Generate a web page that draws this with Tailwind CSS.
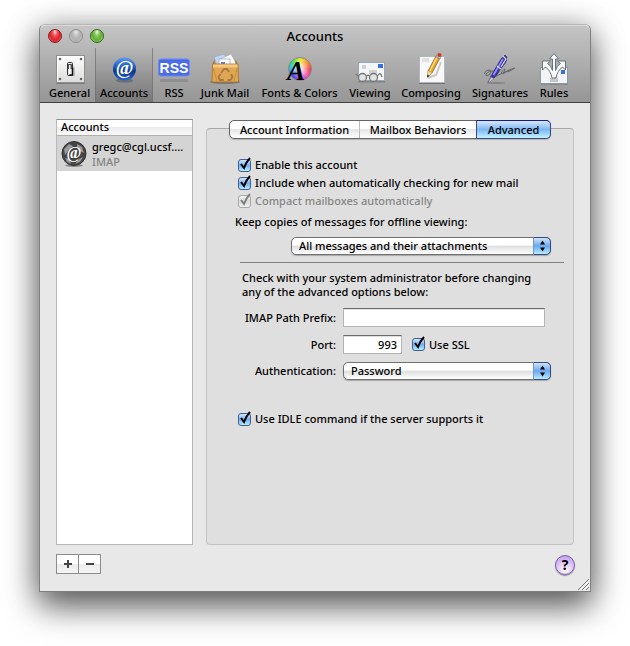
<!DOCTYPE html>
<html lang="en">

<head>
    <meta charset="UTF-8">
    <meta name="viewport" content="width=device-width, initial-scale=1.0">
    <title>Accounts</title>
    <!-- Tailwind CSS -->
    <script src="https://cdn.jsdelivr.net/npm/@tailwindcss/browser@4"></script>
</head>

<body class="bg-white text-black font-['Noto_Sans','Open_Sans',sans-serif] text-[11px] leading-4 font-medium">
    <main class="min-h-screen flex flex-col px-[39px] pt-6 pb-[54px]">
        <div
            class="relative flex-1 flex flex-col rounded-t-md border border-[#808080] border-t-[#b8b8b8] bg-[#e8e8e8] shadow-[0_16px_32px_rgba(0,0,0,0.5),0_4px_32px_rgba(0,0,0,0.35)]">

            <!-- Title bar and toolbar -->
            <header
                class="rounded-t-[5px] border-t border-[#d8d8d8] bg-linear-to-b from-[#c5c5c5] to-[#969696] shadow-[0_1px_0_#404040]">
                <div class="relative flex h-5 items-center justify-center">
                    <div class="absolute left-2 top-[3px] flex gap-[7px]">
                        <button aria-label="Close"
                            class="size-3.5 rounded-full border border-[#7d1a1c] bg-[radial-gradient(ellipse_at_50%_15%,#ffe0e0_0%,#f0555a_28%,#dd1f28_58%,#ff8a8a_100%)]"></button>
                        <button aria-label="Minimize"
                            class="size-3.5 rounded-full border border-[#8b8b8b] bg-[radial-gradient(ellipse_at_50%_15%,#e8e8e8_0%,#b9b9b9_40%,#b0b0b0_60%,#d8d8d8_100%)]"></button>
                        <button aria-label="Zoom"
                            class="size-3.5 rounded-full border border-[#2f6316] bg-[radial-gradient(ellipse_at_50%_15%,#f0ffe4_0%,#8cc860_28%,#5fae32_58%,#c8f596_100%)]"></button>
                    </div>
                    <h1 class="text-[13px]">Accounts</h1>
                </div>
                <nav class="flex pt-0.5 pl-1 text-center">
                    <button class="flex w-[51px] flex-col items-center pt-[5px] pb-px">
                        <svg class="size-8" viewBox="0 0 32 32">
                            <defs>
                                <linearGradient id="plate" x1="0" y1="0" x2="0" y2="1">
                                    <stop offset="0" stop-color="#fff" />
                                    <stop offset="1" stop-color="#dcdcda" />
                                </linearGradient>
                            </defs>
                            <path d="M2 30.500h29" stroke="#555" stroke-opacity=".5" />
                            <rect x="2.500" y="2.500" width="28" height="27" fill="url(#plate)" stroke="#8e8e8a" />
                            <path d="M3.500 29V3.500h26" fill="none" stroke="#fff" />
                            <g fill="#666">
                                <circle cx="6" cy="6" r="1.300" />
                                <circle cx="27" cy="6" r="1.300" />
                                <circle cx="6" cy="26" r="1.300" />
                                <circle cx="27" cy="26" r="1.300" />
                            </g>
                            <path d="M18 11l3 4v8h-6z" fill="#999" opacity=".5" />
                            <rect x="13.500" y="9.500" width="5" height="13" rx="1" fill="#e8e8e8" stroke="#333" />
                            <path d="M14 11h4v5h-4z" fill="#555" />
                            <path d="M15 12h1.500v9h-1.500z" fill="#fff" />
                            <path d="M18.500 15v7h-3" fill="none" stroke="#111" stroke-width="1.500" />
                        </svg>
                        General
                    </button>
                    <button
                        class="flex w-[58px] flex-col items-center border-x border-[#6f6f6f]/70 bg-linear-to-b from-black/0 to-black/20 pt-[5px] pb-px">
                        <svg class="size-8" viewBox="0 0 32 32">
                            <defs>
                                <linearGradient id="at" x1="0" y1="0" x2="0" y2="1">
                                    <stop offset="0" stop-color="#5d9bf0" />
                                    <stop offset=".45" stop-color="#1c55b8" />
                                    <stop offset=".6" stop-color="#0c3588" />
                                    <stop offset="1" stop-color="#2b68cc" />
                                </linearGradient>
                            </defs>
                            <ellipse cx="16.500" cy="27.500" rx="9" ry="2" fill="#333" opacity=".35" />
                            <circle cx="16.500" cy="16" r="11.500" fill="url(#at)" />
                            <text x="16.500" y="21" text-anchor="middle" font-family="Liberation Serif, serif"
                                font-size="19" font-weight="bold" fill="#fff">@</text>
                        </svg>
                        Accounts
                    </button>
                    <button class="flex w-[42px] flex-col items-center pt-[5px] pb-px">
                        <svg class="size-8" viewBox="0 0 32 32">
                            <rect x="2" y="26" width="28" height="3" rx="1" fill="#000" opacity=".12" />
                            <rect x=".5" y="6" width="31" height="17" rx="2.500" fill="#4a6be8" stroke="#6e8cf2" />
                            <text x="16" y="20" text-anchor="middle" font-family="Liberation Sans, sans-serif"
                                font-size="14" font-weight="bold" fill="#fff">RSS</text>
                        </svg>
                        RSS
                    </button>
                    <button class="flex w-[60px] flex-col items-center pt-[5px] pb-px">
                        <svg class="size-8" viewBox="0 0 32 32">
                            <ellipse cx="16" cy="29" rx="15" ry="2" fill="#333" opacity=".35" />
                            <path d="M5 4l10-3 6 9-12 6z" fill="#c2d6f0" stroke="#8ea8cc" stroke-width=".7" />
                            <path d="M11 6l11-5 6 11-13 3z" fill="#fafafa" stroke="#aaa" stroke-width=".7" />
                            <path d="M10 6h11v9h-11z" fill="#fff" stroke="#8aa0c4" stroke-width=".7" />
                            <path d="M12 9h4v3h-4z" fill="#5a83cc" />
                            <path d="M3.500 11l2-5v5zM28.500 11l-2-5v5z" fill="#a8701e" />
                            <path d="M3.500 11h25.500l.5 18h-26.500z" fill="#e0a654" stroke="#a8701e"
                                stroke-width=".8" />
                            <path d="M4 11.500h24.500v3h-24.500z" fill="#f4c880" />
                            <path d="M4 15l4 13M28 15l-3 13" stroke="#c98832" opacity=".7" />
                            <path d="M12 20l3-4h3l2 3M22 21l1.500 3-2 3h-3M15 27h-4l-1.500-3 2-3" fill="none"
                                stroke="#a87c40" stroke-width="2" />
                        </svg>
                        Junk Mail
                    </button>
                    <button class="flex w-[89px] flex-col items-center pt-[5px] pb-px">
                        <span class="relative flex size-8 items-center justify-center">
                            <span
                                class="size-6 rounded-full border border-[#888] bg-[radial-gradient(circle,#fff_0%,rgba(255,255,255,0)_65%),conic-gradient(#e8f020,#ff9030,#f04048,#f050b0,#b040f0,#4040f0,#30b0f0,#30e060,#e8f020)]"></span>
                            <svg class="absolute inset-0" viewBox="0 0 32 32">
                                <text x="12" y="27" text-anchor="middle" font-family="Liberation Serif, serif"
                                    font-size="27" font-weight="bold" font-style="italic">A</text>
                            </svg>
                        </span>
                        Fonts &amp; Colors
                    </button>
                    <button class="flex w-[52px] flex-col items-center pt-[5px] pb-px">
                        <svg class="size-8" viewBox="0 0 32 32">
                            <path d="M4 28.500h27" stroke="#444" stroke-width="2" opacity=".3" />
                            <rect x="4.500" y="9.500" width="26" height="18" fill="#f4f6f8" stroke="#96a6b4" />
                            <rect x="24" y="11" width="5" height="4" fill="#3a6ee0" />
                            <path d="M8 13h4M8 15h4M15 18h8M15 20h8" stroke="#aaa" />
                            <g fill="#d8dcde" fill-opacity=".75" stroke="#777" stroke-width="1.300">
                                <circle cx="8.500" cy="24.500" r="4" />
                                <circle cx="19.500" cy="24.500" r="4" />
                                <path d="M12.500 23q1.500-1.500 3 0M23.500 23q3-5 4.500 1M4.500 23l-3-2" fill="none" />
                            </g>
                        </svg>
                        Viewing
                    </button>
                    <button class="flex w-[70px] flex-col items-center pt-[5px] pb-px">
                        <svg class="size-8" viewBox="0 0 32 32">
                            <path d="M4 30.500h26" stroke="#444" opacity=".5" />
                            <rect x="4.500" y="3.500" width="25" height="26" fill="#f8f8f8" stroke="#b0b8bc" />
                            <path d="M7 6h7M7 8h7" stroke="#c8c8c8" />
                            <path d="M13 25l8-3 5-13" fill="none" stroke="#aaa" opacity=".6" stroke-width="2" />
                            <path d="M13 18l8-15 4 2-8 15-4.500 4z" fill="#e8a030" stroke="#8a5c20"
                                stroke-width=".7" />
                            <path d="M15 18l7-14" stroke="#ffdc70" stroke-width="1.500" />
                            <path d="M13 18l4 2-4.800 4z" fill="#f0d4a8" />
                            <path d="M12 24.500l.5-3 2 1.500z" fill="#222" />
                            <path d="M21 4l1.500-3 4 2-1.500 3z" fill="#bbb" stroke="#777" stroke-width=".5" />
                            <circle cx="24.500" cy="2" r="2" fill="#d03828" />
                        </svg>
                        Composing
                    </button>
                    <button class="flex w-[68px] flex-col items-center pt-[5px] pb-px">
                        <svg class="size-8" viewBox="0 0 32 32">
                            <path
                                d="M0 21q2-5 6-4 2 2-1 5-4 2-3-1 3-4 8-3M8 25q3-8 6-8 1 3-2 6M17 20q4-6 4-3l-2 4 6-4-1 2 7-4M10 24l20-9"
                                fill="none" stroke="#666" stroke-width="1" />
                            <ellipse cx="12" cy="30" rx="9" ry="1" fill="#333" opacity=".25" />
                            <path d="M7 23L17 6l4-4 2 2-1 5-12 16-6 5z" fill="#3a35b0" stroke="#24206e"
                                stroke-width=".6" />
                            <path d="M9.500 22L19 6" stroke="#9a98f0" stroke-width="1.500" />
                            <path d="M7 24l3 2-6 4z" fill="#ccc" stroke="#777" stroke-width=".5" />
                            <path d="M13 13l4 3M19 3l3 3-5 8" fill="none" stroke="#d8d8e0" stroke-width="1.200" />
                        </svg>
                        Signatures
                    </button>
                    <button class="flex w-[40px] flex-col items-center pt-[5px] pb-px">
                        <svg class="size-8" viewBox="0 0 32 32">
                            <path d="M3 31h27" stroke="#444" opacity=".5" />
                            <rect x="2.500" y="14.500" width="27" height="16" fill="#f2f4f6" stroke="#8a9aa8" />
                            <rect x="23" y="17" width="4" height="4" fill="#3a6ee0" />
                            <path d="M12 26h8M12 28h8" stroke="#999" />
                            <path
                                d="M14 25Q13 18 7.500 14l-3 3V8h8l-3 2.500q4 2.500 5 7V6h-3L16 .5 20.500 6h-3v11.500q1-4.500 5-7L19.500 8h8v9l-3-3Q19 18 18 25z"
                                fill="#fcfcfc" stroke="#63727e" stroke-width="1" />
                        </svg>
                        Rules
                    </button>
                </nav>
            </header>

            <div class="flex flex-1 flex-col px-4 pt-[17px] pb-4">
                <div class="flex flex-1 gap-[13px]">
                    <!-- Account list -->
                    <section class="flex w-[137px] flex-col border border-[#b8b8b8] border-t-[#8f8f8f] bg-white">
                        <h2
                            class="h-4 border-b border-[#b0b0b0] bg-linear-to-b from-white from-50% via-[#ececec] via-50% to-[#fafafa] pl-1 leading-[14px]">
                            Accounts</h2>
                        <ul>
                            <li>
                                <button class="flex h-[35px] w-full items-center gap-[5px] bg-[#d4d4d4] pl-1 text-left">
                                    <svg class="size-[26px] shrink-0" viewBox="0 0 26 26">
                                        <ellipse cx="13" cy="24.500" rx="9" ry="1.500" fill="#888" />
                                        <circle cx="13" cy="12.500" r="12" fill="#454545" stroke="#333" />
                                        <path
                                            d="M3 8l5-5 4 2-4 4-4 5zM16 3l5 3 2 6-4-2-3-4zM4 17l4 1 2 5-4-2zM18 18l4-2-3 5-5 2z"
                                            fill="#999" />
                                        <text x="13" y="17" text-anchor="middle"
                                            font-family="Liberation Serif, serif" font-size="16" font-weight="bold"
                                            fill="#fff">@</text>
                                    </svg>
                                    <span class="leading-[15px] whitespace-nowrap">gregc@cgl.ucsf....<br><span
                                            class="text-[#858585]">IMAP</span></span>
                                </button>
                            </li>
                        </ul>
                    </section>

                    <!-- Settings of the selected account -->
                    <section class="mt-[9px] flex-1 rounded border border-[#c2c2c2] border-t-[#a8a8a8] bg-[#dfdfdf]">
                        <div class="-mt-[9px] flex justify-center">
                            <div
                                class="flex h-[19px] rounded-[5px] border border-[#666] bg-linear-to-b from-white from-45% via-[#e6e6e6] via-50% to-white shadow-[0_1px_1px_rgba(0,0,0,0.2)]">
                                <button class="w-[129px]">Account Information</button>
                                <button class="w-[117px] border-l border-[#bbb]">Mailbox Behaviors</button>
                                <button
                                    class="-my-px -mr-px w-[75px] rounded-r-[5px] border border-[#3a4a80] border-t-[#1c1c80] bg-linear-to-b from-[#cfe3fa] from-5% via-[#7cb7f4] via-50% to-[#c4f2ff]">Advanced</button>
                            </div>
                        </div>

                        <form class="pt-[17px] pl-[31px]">
                            <label class="flex h-[18px] items-center gap-1">
                                <span class="relative flex">
                                    <input type="checkbox" checked
                                        class="size-[13px] appearance-none rounded-[3px] border border-[#3f5f96] bg-linear-to-b from-[#d4e6fb] via-[#75b0f0] to-[#b8ecff]">
                                    <svg class="pointer-events-none absolute -top-[3px] left-0 h-4 w-4" viewBox="0 0 16 16">
                                        <path d="M3 8l3 4Q8.500 5.500 12 2" fill="none" stroke="#000"
                                            stroke-width="2" />
                                    </svg>
                                </span>
                                Enable this account
                            </label>
                            <label class="flex h-[18px] items-center gap-1">
                                <span class="relative flex">
                                    <input type="checkbox" checked
                                        class="size-[13px] appearance-none rounded-[3px] border border-[#3f5f96] bg-linear-to-b from-[#d4e6fb] via-[#75b0f0] to-[#b8ecff]">
                                    <svg class="pointer-events-none absolute -top-[3px] left-0 h-4 w-4" viewBox="0 0 16 16">
                                        <path d="M3 8l3 4Q8.500 5.500 12 2" fill="none" stroke="#000"
                                            stroke-width="2" />
                                    </svg>
                                </span>
                                Include when automatically checking for new mail
                            </label>
                            <label class="flex h-[18px] items-center gap-1 text-[#858585]">
                                <span class="relative flex">
                                    <input type="checkbox" checked disabled
                                        class="size-[13px] appearance-none rounded-[3px] border border-[#a8a8a8] bg-linear-to-b from-[#f0f0f0] via-[#dcdcdc] to-[#f0f0f0]">
                                    <svg class="pointer-events-none absolute -top-[3px] left-0 h-4 w-4" viewBox="0 0 16 16">
                                        <path d="M3 8l3 4Q8.500 5.500 12 2" fill="none" stroke="#808080"
                                            stroke-width="2" />
                                    </svg>
                                </span>
                                Compact mailboxes automatically
                            </label>

                            <div class="-ml-[3px] mt-1 pr-[22px]">
                                <label for="offline">Keep copies of messages for offline viewing:</label>
                                <div class="relative mt-[7px] ml-14 rounded-[5px] shadow-[0_1px_1px_rgba(0,0,0,0.25)]">
                                    <select id="offline"
                                        class="block h-[18px] w-full appearance-none rounded-[5px] border border-[#707070] bg-linear-to-b from-white from-45% via-[#dedede] via-50% to-white pl-[7px] leading-4">
                                        <option>All messages and their attachments</option>
                                    </select>
                                    <span
                                        class="pointer-events-none absolute inset-y-0 right-0 flex w-[18px] items-center justify-center rounded-r-[5px] border border-[#3a4a80] border-l-[#6a9ad0] bg-linear-to-b from-[#cfe3fa] via-[#69a8ee] to-[#b8ecff]">
                                        <svg class="h-3 w-[5px]" viewBox="0 0 5 12">
                                            <path d="M0 4.500L2.500 .5 5 4.500zM0 7.500h5L2.500 11.500z" />
                                        </svg>
                                    </span>
                                </div>
                            </div>

                            <hr class="mt-[7px] mr-[9px] ml-0.5 border-[#808080]">

                            <p class="mt-2 ml-1 leading-[14px]">Check with your system administrator before changing<br>any
                                of the advanced options below:</p>

                            <div
                                class="mt-[9px] grid grid-cols-[98px_1fr] items-center gap-x-[7px] gap-y-2 pr-[22px] text-right">
                                <label for="prefix">IMAP Path Prefix:</label>
                                <input id="prefix" type="text"
                                    class="mr-1.5 h-[19px] border border-[#b4b4b4] border-t-[#6c6c6c] bg-white px-1 shadow-[inset_0_1px_0_#e0e0e0]">
                                <label for="port">Port:</label>
                                <div class="flex items-center gap-2.5">
                                    <input id="port" type="text" value="993"
                                        class="h-[19px] w-[59px] border border-[#b4b4b4] border-t-[#6c6c6c] bg-white px-1 text-right shadow-[inset_0_1px_0_#e0e0e0]">
                                    <label class="flex h-[18px] items-center gap-1">
                                        <span class="relative flex">
                                            <input type="checkbox" checked
                                                class="size-[13px] appearance-none rounded-[3px] border border-[#3f5f96] bg-linear-to-b from-[#d4e6fb] via-[#75b0f0] to-[#b8ecff]">
                                            <svg class="pointer-events-none absolute -top-[3px] left-0 h-4 w-4"
                                                viewBox="0 0 16 16">
                                                <path d="M3 8l3 4Q8.500 5.500 12 2" fill="none" stroke="#000"
                                                    stroke-width="2" />
                                            </svg>
                                        </span>
                                        Use SSL
                                    </label>
                                </div>
                                <label for="auth">Authentication:</label>
                                <div class="relative rounded-[5px] shadow-[0_1px_1px_rgba(0,0,0,0.25)]">
                                    <select id="auth"
                                        class="block h-[18px] w-full appearance-none rounded-[5px] border border-[#707070] bg-linear-to-b from-white from-45% via-[#dedede] via-50% to-white pl-[7px] leading-4">
                                        <option>Password</option>
                                    </select>
                                    <span
                                        class="pointer-events-none absolute inset-y-0 right-0 flex w-[18px] items-center justify-center rounded-r-[5px] border border-[#3a4a80] border-l-[#6a9ad0] bg-linear-to-b from-[#cfe3fa] via-[#69a8ee] to-[#b8ecff]">
                                        <svg class="h-3 w-[5px]" viewBox="0 0 5 12">
                                            <path d="M0 4.500L2.500 .5 5 4.500zM0 7.500h5L2.500 11.500z" />
                                        </svg>
                                    </span>
                                </div>
                            </div>

                            <label class="mt-[30px] flex h-[18px] items-center gap-1">
                                <span class="relative flex">
                                    <input type="checkbox" checked
                                        class="size-[13px] appearance-none rounded-[3px] border border-[#3f5f96] bg-linear-to-b from-[#d4e6fb] via-[#75b0f0] to-[#b8ecff]">
                                    <svg class="pointer-events-none absolute -top-[3px] left-0 h-4 w-4" viewBox="0 0 16 16">
                                        <path d="M3 8l3 4Q8.500 5.500 12 2" fill="none" stroke="#000"
                                            stroke-width="2" />
                                    </svg>
                                </span>
                                Use IDLE command if the server supports it
                            </label>
                        </form>
                    </section>
                </div>

                <footer class="mt-[9px] flex items-end justify-between">
                    <div
                        class="mb-px flex border border-[#8c8c8c] bg-linear-to-b from-white from-50% via-[#ececec] via-50% to-[#f4f4f4]">
                        <button aria-label="Add account" class="flex h-[18px] w-[21px] items-center justify-center">
                            <svg class="size-2" viewBox="0 0 8 8">
                                <path d="M0 4h8M4 0v8" stroke="#444" stroke-width="2" />
                            </svg>
                        </button>
                        <button aria-label="Remove account"
                            class="flex h-[18px] w-[22px] items-center justify-center border-l border-[#8c8c8c]">
                            <svg class="size-2" viewBox="0 0 8 8">
                                <path d="M0 4h8" stroke="#444" stroke-width="2" />
                            </svg>
                        </button>
                    </div>
                    <button aria-label="Help"
                        class="-mr-px size-5 rounded-full border border-[#7d5fa8] bg-[radial-gradient(circle_at_50%_75%,#fff_0%,#dcc4fa_50%,#b48ae4_100%)] text-[14px] leading-[18px] font-bold shadow-[0_1px_1px_rgba(0,0,0,0.4)]">?</button>
                </footer>
            </div>

            <!-- Resize grip -->
            <svg class="absolute right-px bottom-px size-[11px]" viewBox="0 0 11 11">
                <path d="M0 11L11 0M4 11l7-7M8 11l3-3" stroke="#777" />
                <path d="M1.500 11L11 1.500M5.500 11L11 5.500" stroke="#fff" stroke-width=".7" />
            </svg>
        </div>
    </main>
</body>

</html>
